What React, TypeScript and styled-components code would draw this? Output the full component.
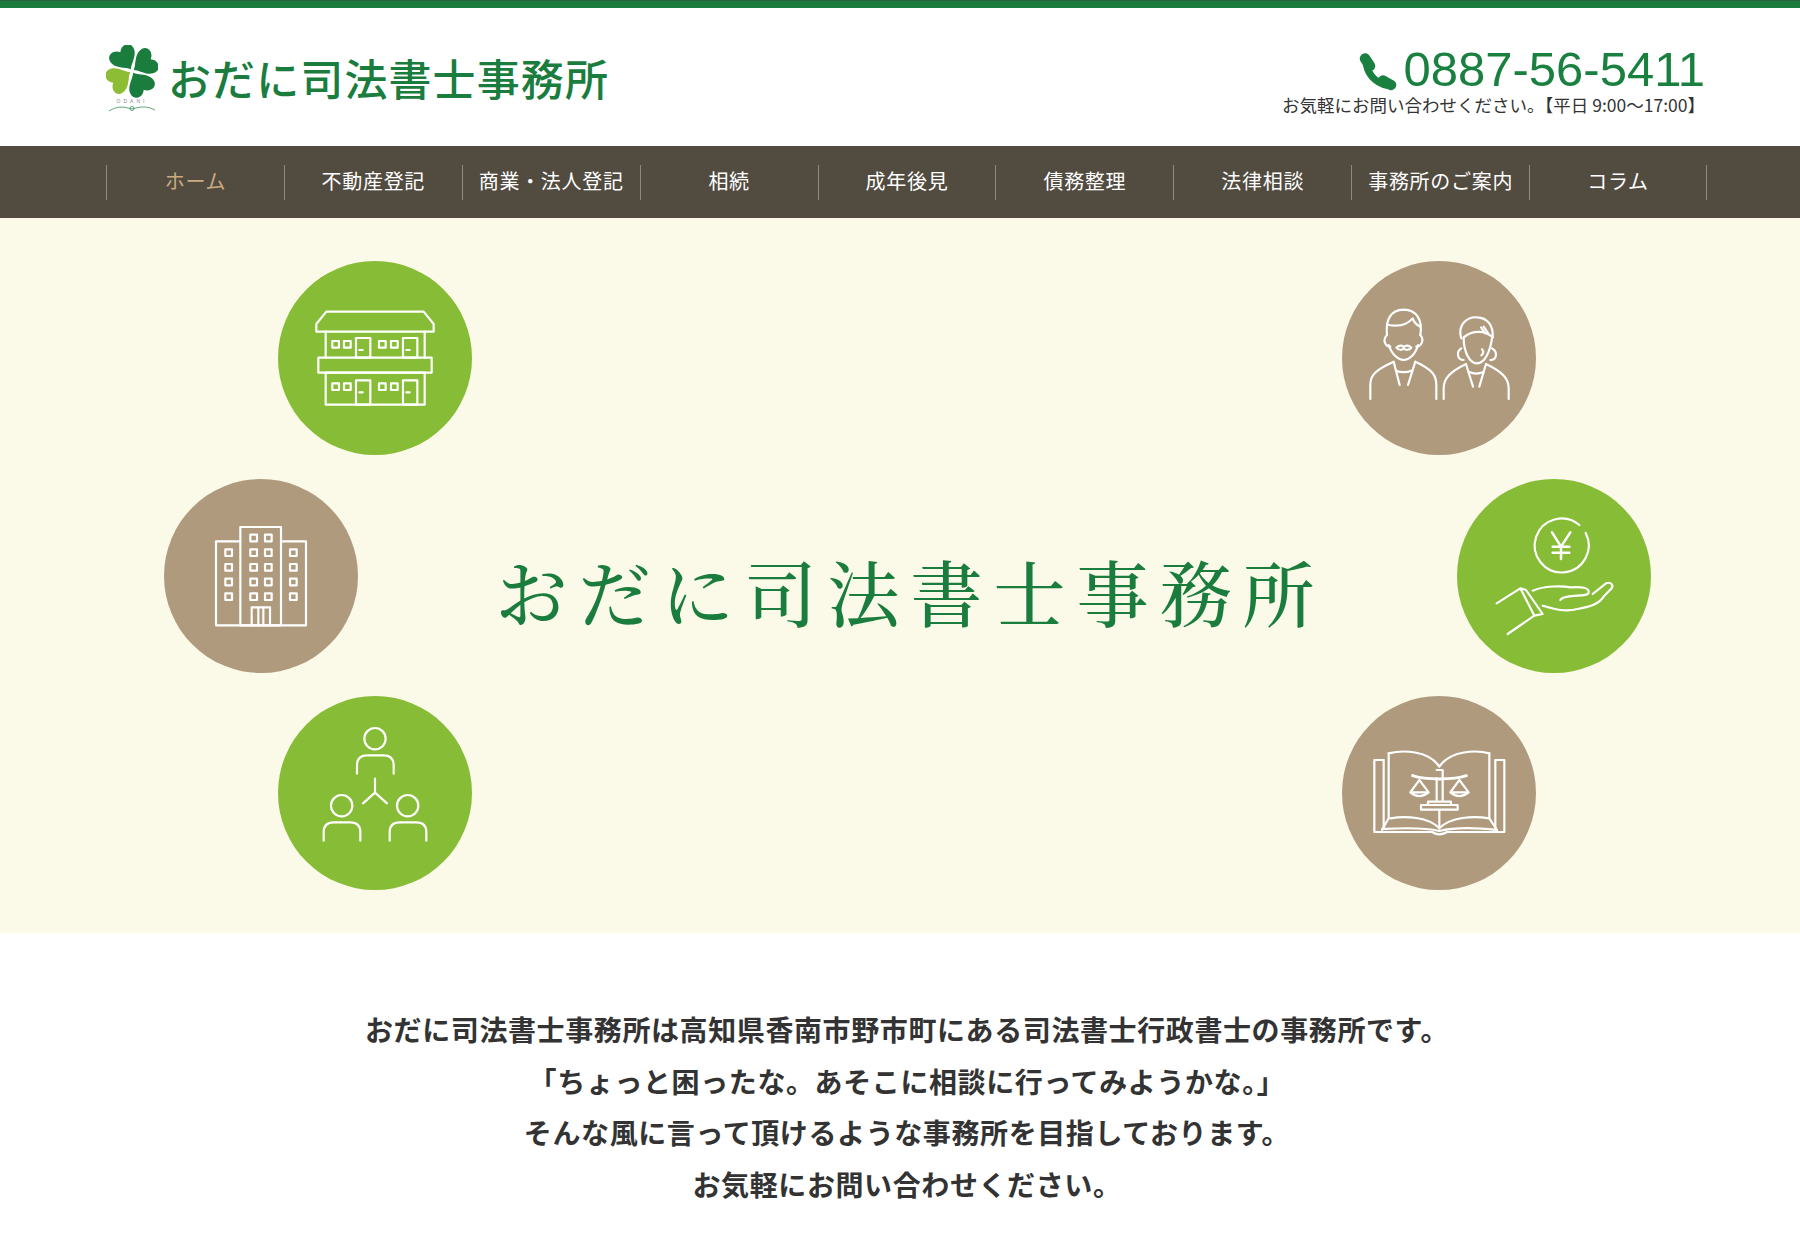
import React from "react";
import styled, { createGlobalStyle } from "styled-components";

const Global = createGlobalStyle`
  html, body { margin: 0; padding: 0; background: #fff; }
  body { font-family: "Noto Sans CJK JP", "Liberation Sans", sans-serif; overflow-x: hidden; }
`;

const TopBar = styled.div`
  height: 8px;
  background: #1a7d3e;
  box-shadow: inset 0 1px 0 #2c5f42;
`;

const Header = styled.header`
  height: 138px;
  width: 1601px;
  margin-left: 106px;
  display: flex;
  justify-content: space-between;
  align-items: center;
`;

const Brand = styled.div`
  display: flex;
  align-items: center;
  gap: 10px;
`;

const BrandMark = styled.svg`
  display: block;
  width: 52px;
  height: 68px;
  margin-top: 4px;
`;

const BrandName = styled.div`
  font-size: 43px;
  font-weight: 500;
  letter-spacing: 1.1px;
  line-height: 56px;
  color: #1a7d3e;
  white-space: nowrap;
`;

const Contact = styled.div`
  display: flex;
  flex-direction: column;
  align-items: flex-end;
  margin-top: 4px;
  margin-right: 2px;
`;

const PhoneRow = styled.div`
  display: flex;
  align-items: center;
  gap: 6px;
  height: 46px;
  margin-top: 6px;
`;

const PhoneIcon = styled.svg`
  display: block;
  width: 38px;
  height: 38px;
  margin-top: 6px;
`;

const PhoneNumber = styled.div`
  font-family: "Liberation Sans", sans-serif;
  font-size: 49px;
  line-height: 46px;
  color: #1a8040;
`;

const Hours = styled.div`
  font-size: 17.5px;
  line-height: 26px;
  color: #333;
  white-space: nowrap;
`;

const Nav = styled.nav`
  height: 72px;
  background: #524b40;
  display: flex;
  align-items: center;
`;

const NavList = styled.ul`
  list-style: none;
  margin: 0 0 0 106px;
  padding: 0;
  width: 1601px;
  display: grid;
  grid-template-columns: repeat(9, 1fr);
`;

const NavItem = styled.li<{ $active?: boolean; $last?: boolean }>`
  height: 35px;
  padding-bottom: 4px;
  display: flex;
  align-items: center;
  justify-content: center;
  box-sizing: border-box;
  border-left: 1px solid #8f897e;
  border-right: ${(p) => (p.$last ? "1px solid #8f897e" : "0")};
  font-size: 20px;
  letter-spacing: 0.7px;
  color: ${(p) => (p.$active ? "#c9ab80" : "#fff")};
  white-space: nowrap;
`;

const Hero = styled.section`
  background: #fbf9e8;
  height: 715px;
  box-sizing: border-box;
  padding: 43px 149px 0 164px;
  display: flex;
  justify-content: space-between;
`;

const CircleColumn = styled.div<{ $width: number }>`
  width: ${(p) => p.$width}px;
  flex: none;
  display: flex;
  flex-direction: column;
  gap: 23.5px;
`;

const Circle = styled.div<{ $tone: "green" | "brown"; $side: "start" | "end" }>`
  width: 194px;
  height: 194px;
  border-radius: 50%;
  background: ${(p) => (p.$tone === "green" ? "#87bc36" : "#af9a7e")};
  align-self: ${(p) => (p.$side === "start" ? "flex-start" : "flex-end")};
`;

const IconSvg = styled.svg`
  display: block;
  width: 100%;
  height: 100%;
  fill: none;
  stroke: #fff;
  stroke-width: 6.5;
  stroke-linecap: round;
  stroke-linejoin: round;
`;

const HeroTitle = styled.h1`
  flex: 1;
  margin: 0;
  padding: 30px 0 0 7px;
  display: flex;
  align-items: center;
  justify-content: center;
  font-family: "Noto Serif CJK JP", "Noto Sans CJK JP", serif;
  font-size: 72px;
  font-weight: 500;
  letter-spacing: 11px;
  color: #1a7d3e;
  white-space: nowrap;
  height: 628px;
  box-sizing: border-box;
`;

const Intro = styled.section`
  padding: 71px 0 0 14px;
  text-align: center;
  font-size: 28px;
  font-weight: 700;
  letter-spacing: 0.6px;
  line-height: 51.5px;
  color: #333;
`;

const IntroLine = styled.p`
  margin: 0;
`;

const NAV = ["ホーム", "不動産登記", "商業・法人登記", "相続", "成年後見", "債務整理", "法律相談", "事務所のご案内", "コラム"];

const Heart = ({ angle, color }: { angle: number; color: string }) => (
  <path
    transform={`translate(26 26) rotate(${angle})`}
    fill={color}
    d="M0 -2C-3 -7 -14 -11 -13.500 -20C-13 -27 -4 -28 0 -22C4 -28 13 -27 13.500 -20C14 -11 3 -7 0 -2Z"
  />
);

const Logo = () => (
  <BrandMark viewBox="0 0 52 68">
    <Heart angle={-32} color="#1a7d3e" />
    <Heart angle={58} color="#1a7d3e" />
    <Heart angle={148} color="#1a7d3e" />
    <Heart angle={238} color="#8cbd35" />
    <text x="26" y="58" textAnchor="middle" fontSize="5" letterSpacing="3" fontFamily="Liberation Sans, sans-serif" fill="#888">
      ODANI
    </text>
    <path d="M3 66Q12 60 22 63Q26 65 30 63Q40 60 49 65" fill="none" stroke="#3f8f5b" strokeWidth="0.8" />
    <circle cx="26" cy="63.500" r="2" fill="none" stroke="#3f8f5b" strokeWidth="0.8" />
  </BrandMark>
);

const Phone = () => (
  <PhoneIcon viewBox="0 0 38 38">
    <path d="M7 8C7.500 19 15 30 29 32.500" fill="none" stroke="#1a8040" strokeWidth="7" />
    <path d="M6 5.500L11 13" fill="none" stroke="#1a8040" strokeWidth="10.500" strokeLinecap="round" />
    <path d="M24 27.500L32 32" fill="none" stroke="#1a8040" strokeWidth="10.500" strokeLinecap="round" />
  </PhoneIcon>
);

const Apartment = () => (
  <IconSvg viewBox="25 33 582 582">
    <path d="M140 245V222L170 185H462L492 222V245Z" />
    <path d="M168 245V323M465 245V323" />
    <rect x="146" y="323" width="340" height="45" />
    <rect x="168" y="368" width="297" height="96" />
    {[264, 391].map((y) => (
      <g key={y}>
        {[188, 223, 328, 364].map((x) => (
          <rect key={x} x={x} y={y + 9} width="20" height="20" />
        ))}
        {[259, 400].map((x) => (
          <g key={x}>
            <rect x={x} y={y} width="43" height={y === 264 ? 59 : 73} />
            <path d={`M${x + 10} ${y + 36}H${x + 20}`} />
          </g>
        ))}
      </g>
    ))}
  </IconSvg>
);

const Office = () => (
  <IconSvg viewBox="27 25 582 582">
    <rect x="256" y="169" width="122" height="295" />
    <path d="M256 212H183V464H453V212H378" />
    <path d="M290 464V410H345V464M310 410V464M325 410V464" />
    {[202, 246, 290, 334, 378].map((y) =>
      [296, 340].map((x) => <rect key={`${x}-${y}`} x={x - 10} y={y - 10} width="20" height="20" />)
    )}
    {[246, 290, 334, 378].map((y) =>
      [221, 415].map((x) => <rect key={`${x}-${y}`} x={x - 10} y={y - 10} width="20" height="20" />)
    )}
  </IconSvg>
);

const Person = ({ x, y }: { x: number; y: number }) => (
  <g>
    <circle cx={x} cy={y} r="32" />
    <path d={`M${x - 54} ${y + 105}V${y + 80}Q${x - 54} ${y + 50} ${x - 24} ${y + 50}H${x + 26}Q${x + 56} ${y + 50} ${x + 56} ${y + 80}V${y + 105}`} />
  </g>
);

const Team = () => (
  <IconSvg viewBox="25 32 582 582">
    <Person x={316} y={160} />
    <Person x={216} y={361} />
    <Person x={414} y={361} />
    <path d="M316 280V322M316 322L280 354M316 322L352 354" />
  </IconSvg>
);

const Couple = () => (
  <IconSvg viewBox="20 33 582 582">
    <path d="M155 255C150 210 165 180 205 179C245 180 262 210 255 255" />
    <path d="M155 255C140 270 150 290 165 290M255 255C268 270 258 290 243 290" />
    <path d="M160 285C170 315 190 330 205 330C220 330 240 315 248 285" />
    <path d="M160 225C190 230 215 225 232 205C235 215 245 225 255 230" />
    <path d="M183 293C195 283 203 287 205 292C208 287 218 283 228 293C222 302 210 300 205 296C200 300 190 302 183 293Z" />
    <path d="M105 447V405C105 375 120 360 175 335L193 405M240 335L218 405M240 335C290 358 303 375 303 405V447" />
    <path d="M183 362C195 368 215 368 228 362" />
    <path d="M378 265C365 225 395 200 425 202C455 203 475 225 472 262" />
    <path d="M385 262C410 240 450 240 472 262M437 232L450 250M445 230L462 255" />
    <path d="M385 265C385 300 400 340 425 340C450 340 465 300 470 265" />
    <path d="M378 295C362 305 365 330 385 330M470 295C488 305 485 330 465 330M440 298C447 305 443 312 438 316" />
    <path d="M325 447V415C325 385 345 365 392 342L413 410M452 342L432 410M452 342C500 365 520 385 520 415V447" />
    <path d="M402 366C415 372 430 372 444 366" />
  </IconSvg>
);

const YenHand = () => (
  <IconSvg viewBox="18 25 582 582">
    <path d="M385 163A81 81 0 1 0 404 187" />
    <path d="M303 185L330 228L358 185M330 228V265M305 228H355M305 246H355" strokeWidth="7.500" />
    <path d="M137 398L208 353L250 435L170 490M250 435L275 430L225 358L208 353" />
    <path d="M245 360C280 345 330 345 360 350C390 348 415 350 413 365C412 378 370 372 350 378C340 380 330 385 328 388" />
    <path d="M275 405C310 415 340 425 380 415C420 408 445 400 460 375L480 355C490 345 480 332 465 338L425 370" />
  </IconSvg>
);

const Book = () => (
  <IconSvg viewBox="20 33 582 582" strokeWidth="5.500">
    <path d="M145 225H117V441H290Q312 455 335 441H507V225H480" />
    <path d="M145 225V430M480 225V430" />
    <path d="M160 205C200 195 280 195 312 245C345 195 425 195 462 205" />
    <path d="M160 205V400L140 435M462 205V400L485 435" />
    <path d="M312 375V430" />
    <path d="M140 432C180 430 260 425 312 438C365 425 440 430 485 435" />
    <path d="M165 400C210 392 280 395 312 430C345 395 415 392 462 400" />
    <path d="M232 272C270 285 355 285 393 272" strokeWidth="9" />
    <path d="M304 280V350M322 280V350M304 255H322V280" />
    <rect x="257" y="360" width="110" height="14" />
    <path d="M278 360V350H347V360" />
    <path d="M252 285L225 322Q252 345 280 322ZM225 322H280" />
    <path d="M372 285L345 322Q372 345 400 322ZM345 322H400" />
  </IconSvg>
);

export default function App() {
  return (
    <>
      <Global />
      <TopBar />
      <Header>
        <Brand>
          <Logo />
          <BrandName>おだに司法書士事務所</BrandName>
        </Brand>
        <Contact>
          <PhoneRow>
            <Phone />
            <PhoneNumber>0887-56-5411</PhoneNumber>
          </PhoneRow>
          <Hours>お気軽にお問い合わせください。【平日 9:00〜17:00】</Hours>
        </Contact>
      </Header>
      <Nav>
        <NavList>
          {NAV.map((label, i) => (
            <NavItem key={label} $active={i === 0} $last={i === NAV.length - 1}>
              {label}
            </NavItem>
          ))}
        </NavList>
      </Nav>
      <Hero>
        <CircleColumn $width={308}>
          <Circle $tone="green" $side="end"><Apartment /></Circle>
          <Circle $tone="brown" $side="start"><Office /></Circle>
          <Circle $tone="green" $side="end"><Team /></Circle>
        </CircleColumn>
        <HeroTitle>おだに司法書士事務所</HeroTitle>
        <CircleColumn $width={309}>
          <Circle $tone="brown" $side="start"><Couple /></Circle>
          <Circle $tone="green" $side="end"><YenHand /></Circle>
          <Circle $tone="brown" $side="start"><Book /></Circle>
        </CircleColumn>
      </Hero>
      <Intro>
        <IntroLine>おだに司法書士事務所は高知県香南市野市町にある司法書士行政書士の事務所です。</IntroLine>
        <IntroLine>「ちょっと困ったな。あそこに相談に行ってみようかな。」</IntroLine>
        <IntroLine>そんな風に言って頂けるような事務所を目指しております。</IntroLine>
        <IntroLine>お気軽にお問い合わせください。</IntroLine>
      </Intro>
    </>
  );
}
